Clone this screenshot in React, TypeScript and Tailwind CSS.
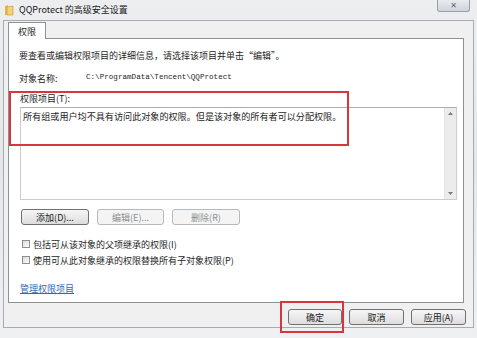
import React from "react";

const F = { fontFamily: '"Noto Sans CJK SC", "Noto Sans", sans-serif' };

function Btn({ label, disabled, w }: { label: string; disabled?: boolean; w: string }) {
  return (
    <div
      className={`${w} h-[16px] flex items-center justify-center rounded-[3px] border text-[9px] leading-none ${
        disabled
          ? "border-[#b5b9bc] bg-[#f4f4f4] text-[#8d8d8d]"
          : "border-[#707070] bg-gradient-to-b from-[#f6f6f6] to-[#dddddd] text-[#1a1a1a]"
      }`}
    >
      {label}
    </div>
  );
}

function Check({ label }: { label: string }) {
  return (
    <div className="flex items-center h-[16px]">
      <div className="w-[8px] h-[8px] border border-[#8f8f8f] bg-gradient-to-br from-[#dcdcdc] to-[#fbfbfb] ml-[13px]" />
      <span className="ml-[3px] text-[9px] leading-none text-[#1e1e1e]">{label}</span>
    </div>
  );
}

export default function App() {
  return (
    <div
      className="relative w-[477px] h-[338px] overflow-hidden bg-gradient-to-b from-[#eceef0] via-[#e4e6e9] to-[#eef0f2]"
      style={F}
    >
      {/* title bar */}
      <div className="h-[20px] flex items-start">
        <svg width="10" height="12" viewBox="0 0 10 12" className="ml-[4px] mt-[4px]">
          <path d="M1 2 L4 1 L4 11 L1 11 Z" fill="#e7b94a" />
          <path d="M3 3 L9 2 L9 11 L3 11 Z" fill="#f4d27a" stroke="#c9962c" strokeWidth="0.6" />
        </svg>
        <span className="ml-[5px] mt-[4px] text-[9px] leading-[12px] text-[#1a1a1a]">
          QQProtect 的高级安全设置
        </span>
        <div className="ml-auto mr-[7px] w-[33px] h-[12px] rounded-b-[3px] border border-t-0 border-[#9aa0a8] bg-gradient-to-b from-[#e9ecef] to-[#cfd4da] flex items-center justify-center">
          <span className="text-[8px] leading-none text-[#5b6470] font-bold" style={{ fontFamily: '"DejaVu Sans", sans-serif' }}>✕</span>
        </div>
      </div>

      {/* client area */}
      <div className="mx-[3px] h-[308px] border border-[#a8abaf] bg-[#f0f0f0] pl-[4px] pt-[1px] flex flex-col">
        {/* tab header */}
        <div className="relative z-10 w-[38px] h-[17px] border border-b-0 border-[#8e9094] bg-white flex items-center justify-center">
          <span className="text-[9px] leading-none text-[#1e1e1e]">权限</span>
        </div>
        {/* tab panel */}
        <div className="-mt-px w-[456px] h-[265px] border border-[#8e9094] bg-white flex flex-col pl-[10px]">
          <div className="mt-[10px] h-[12px] flex items-center text-[9px] leading-none text-[#1e1e1e]">
            要查看或编辑权限项目的详细信息，请选择该项目并单击“编辑”。
          </div>
          <div className="mt-[11px] h-[12px] flex items-center text-[9px] leading-none text-[#1e1e1e]">
            <span className="w-[67px]">对象名称:</span>
            <span className="text-[7.6px]" style={{ fontFamily: '"Liberation Mono", monospace' }}>
              C:\ProgramData\Tencent\QQProtect
            </span>
          </div>
          <div className="mt-[8px] h-[12px] flex items-center text-[9px] leading-none text-[#1e1e1e] ml-px">
            权限项目(T):
          </div>
          {/* listbox */}
          <div className="mt-[3px] ml-px w-[437px] h-[93px] border border-[#c9cdd2] border-t-[#abadb3] flex">
            <div className="flex-1 pl-[2px] pt-[2px]">
              <div className="text-[9.1px] leading-[12px] text-[#1e1e1e]">
                所有组或用户均不具有访问此对象的权限。但是该对象的所有者可以分配权限。
              </div>
            </div>
            <div className="w-[12px] bg-[#ececec] border-l border-[#e2e2e2] flex flex-col justify-between items-center py-[4px]">
              <svg width="5" height="3" viewBox="0 0 5 3"><path d="M0 3 L2.5 0 L5 3 Z" fill="#7a7a7a" /></svg>
              <svg width="5" height="3" viewBox="0 0 5 3"><path d="M0 0 L2.5 3 L5 0 Z" fill="#7a7a7a" /></svg>
            </div>
          </div>
          {/* buttons */}
          <div className="mt-[9px] ml-[2px] flex gap-[8px]">
            <Btn label="添加(D)..." w="w-[68px]" />
            <Btn label="编辑(E)..." w="w-[67px]" disabled />
            <Btn label="删除(R)" w="w-[68px]" disabled />
          </div>
          <div className="mt-[11px] -ml-[10px] flex flex-col">
            <Check label="包括可从该对象的父项继承的权限(I)" />
            <Check label="使用可从此对象继承的权限替换所有子对象权限(P)" />
          </div>
          <div className="mt-[14px] ml-px h-[12px] flex items-center">
            <span className="text-[9px] leading-none text-[#2c6bb5] underline">管理权限项目</span>
          </div>
        </div>
        {/* bottom buttons */}
        <div className="mt-[6px] flex justify-end gap-[7px] pr-[7px]">
          <Btn label="确定" w="w-[54px]" />
          <Btn label="取消" w="w-[55px]" />
          <Btn label="应用(A)" w="w-[55px]" />
        </div>
      </div>

      {/* red highlight boxes */}
      <div className="absolute left-[9px] top-[91px] w-[340px] h-[55px] border-2 border-[#d8363e]" />
      <div className="absolute left-[280px] top-[301px] w-[64px] h-[32px] border-2 border-[#d8363e]" />
    </div>
  );
}
